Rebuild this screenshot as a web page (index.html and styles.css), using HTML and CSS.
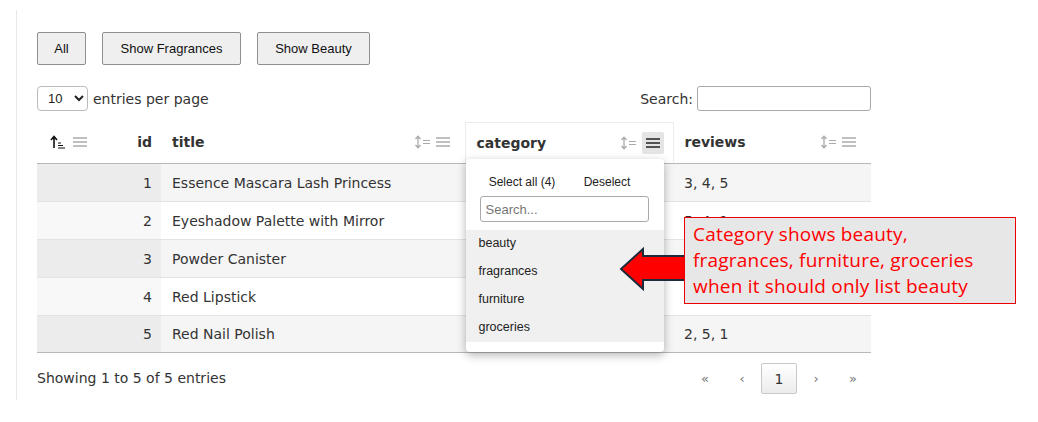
FILE: index.html
```html
<!DOCTYPE html>
<html>
<head>
<meta charset="utf-8">
<link rel="stylesheet" href="styles.css">
</head>
<body>
<div class="page">
  <div class="btns">
    <button class="btn btn-all">All</button>
    <button class="btn btn-frag">Show Fragrances</button>
    <button class="btn btn-beauty">Show Beauty</button>
  </div>
  <div class="controls">
    <label class="len"><select class="len-select"><option>10</option></select><span>entries per page</span></label>
    <label class="search"><span>Search:</span><input class="search-input" type="text"></label>
  </div>
  <table class="dt">
    <colgroup><col class="c-id"><col class="c-title"><col class="c-cat"><col class="c-rev"></colgroup>
    <thead>
      <tr>
        <th class="th-num">
          <div class="th-in">
            <span class="icons">
              <svg class="ic-asc" width="15" height="14" viewBox="0 0 15 14"><path d="M4 13V2M1 5l3-3.5L7 5" fill="none" stroke="#111" stroke-width="1.6"/><path d="M8 8h3M8 10.5h5M8 13h7" stroke="#111" stroke-width="1.2"/></svg>
              <svg class="ic-menu" width="14" height="14" viewBox="0 0 14 14"><path d="M0 3h14M0 7h14M0 11h14" stroke="#aaa" stroke-width="1.3"/></svg>
            </span>
            <span class="th-label">id</span>
          </div>
        </th>
        <th>
          <div class="th-in">
            <span class="th-label">title</span>
            <span class="icons">
              <svg class="ic-sort" width="17" height="14" viewBox="0 0 17 14"><path d="M4 1.5v11M1.5 4L4 1.3 6.5 4M1.5 10L4 12.7 6.5 10" fill="none" stroke="#aaa" stroke-width="1.3"/><path d="M9 5.5h7M9 8.5h7" stroke="#aaa" stroke-width="1.2"/></svg>
              <svg class="ic-menu" width="14" height="14" viewBox="0 0 14 14"><path d="M0 3h14M0 7h14M0 11h14" stroke="#aaa" stroke-width="1.3"/></svg>
            </span>
          </div>
        </th>
        <th class="th-active">
          <div class="th-in">
            <span class="th-label">category</span>
            <span class="icons">
              <svg class="ic-sort" width="17" height="14" viewBox="0 0 17 14"><path d="M4 1.5v11M1.5 4L4 1.3 6.5 4M1.5 10L4 12.7 6.5 10" fill="none" stroke="#aaa" stroke-width="1.3"/><path d="M9 5.5h7M9 8.5h7" stroke="#aaa" stroke-width="1.2"/></svg>
              <span class="menu-on"><svg class="ic-menu" width="14" height="14" viewBox="0 0 14 14"><path d="M0 3h14M0 7h14M0 11h14" stroke="#222" stroke-width="1.5"/></svg></span>
            </span>
          </div>
          <div class="dd">
            <div class="dd-actions"><span class="dd-btn">Select all (4)</span><span class="dd-btn">Deselect</span></div>
            <input class="dd-search" type="text" placeholder="Search...">
            <ul class="dd-list">
              <li>beauty</li>
              <li>fragrances</li>
              <li>furniture</li>
              <li>groceries</li>
            </ul>
          </div>
        </th>
        <th>
          <div class="th-in">
            <span class="th-label">reviews</span>
            <span class="icons">
              <svg class="ic-sort" width="17" height="14" viewBox="0 0 17 14"><path d="M4 1.5v11M1.5 4L4 1.3 6.5 4M1.5 10L4 12.7 6.5 10" fill="none" stroke="#aaa" stroke-width="1.3"/><path d="M9 5.5h7M9 8.5h7" stroke="#aaa" stroke-width="1.2"/></svg>
              <svg class="ic-menu" width="14" height="14" viewBox="0 0 14 14"><path d="M0 3h14M0 7h14M0 11h14" stroke="#aaa" stroke-width="1.3"/></svg>
            </span>
          </div>
        </th>
      </tr>
    </thead>
    <tbody>
      <tr class="odd"><td class="num">1</td><td>Essence Mascara Lash Princess</td><td>beauty</td><td>3, 4, 5</td></tr>
      <tr class="even"><td class="num">2</td><td>Eyeshadow Palette with Mirror</td><td>beauty</td><td>5, 4, 1</td></tr>
      <tr class="odd"><td class="num">3</td><td>Powder Canister</td><td>beauty</td><td>4, 4, 5</td></tr>
      <tr class="even"><td class="num">4</td><td>Red Lipstick</td><td>beauty</td><td>5, 5, 4</td></tr>
      <tr class="odd"><td class="num">5</td><td>Red Nail Polish</td><td>beauty</td><td>2, 5, 1</td></tr>
    </tbody>
  </table>
  <div class="foot">
    <div class="info">Showing 1 to 5 of 5 entries</div>
    <nav class="pager">
      <span class="pg dis">«</span>
      <span class="pg dis">‹</span>
      <span class="pg cur">1</span>
      <span class="pg dis">›</span>
      <span class="pg dis">»</span>
    </nav>
  </div>
</div>
<svg class="arrow" width="72" height="44" viewBox="0 0 72 44"><path d="M2 22L24 2V9H71V33H24V42Z" fill="#ff0000" stroke="#1c2b3a" stroke-width="2" stroke-linejoin="miter"/></svg>
<div class="note">Category shows beauty,<br>fragrances, furniture, groceries<br>when it should only list beauty</div>
</body>
</html>
```

FILE: styles.css
```css
* { box-sizing: border-box; }
html, body { margin: 0; padding: 0; background: #fff; }
body {
  font-family: "DejaVu Sans", Verdana, sans-serif;
  font-size: 14px;
  color: #333;
  position: relative;
  width: 1038px;
  height: 422px;
  overflow: hidden;
}
.page {
  margin: 10px 0 0 16px;
  border-left: 1px solid #e8e8e8;
  padding: 22px 0 0 20px;
  width: 855px;
  height: 390px;
}
.btns { display: flex; gap: 16px; height: 33px; }
.btn {
  font-family: "Liberation Sans", Arial, sans-serif;
  font-size: 13px;
  color: #111;
  background: #efefef;
  border: 1px solid #8f8f8f;
  border-radius: 2px;
  height: 33px;
  padding: 0;
}
.btn-all { width: 49px; }
.btn-frag { width: 139px; }
.btn-beauty { width: 113px; }
.controls {
  margin-top: 21px;
  width: 834px;
  display: flex;
  justify-content: space-between;
  align-items: center;
  height: 25px;
}
.len { display: flex; align-items: center; gap: 5px; }
.len-select {
  width: 51px;
  height: 25px;
  border: 1px solid #bbb;
  border-radius: 4px;
  background: #fff;
  font-family: "Liberation Sans", Arial, sans-serif;
  font-size: 13px;
  color: #222;
  padding-left: 6px;
}
.search { display: flex; align-items: center; gap: 4px; }
.search-input {
  width: 174px;
  height: 25px;
  border: 1px solid #aaa;
  border-radius: 3px;
}
.dt {
  margin-top: 11px;
  width: 834px;
  border-collapse: collapse;
  table-layout: fixed;
}
.c-id { width: 124px; }
.c-title { width: 304px; }
.c-cat { width: 208px; }
.c-rev { width: 198px; }
.dt th {
  position: relative;
  height: 41px;
  padding: 0 15px 1px 11px;
  text-align: left;
  font-weight: bold;
  font-size: 14px;
  color: #333;
  border-bottom: 1px solid #b8b8b8;
}
.dt th.th-num { padding: 0 9px 1px 13px; }
.th-in { display: flex; align-items: center; justify-content: space-between; }
.icons { display: flex; align-items: center; gap: 5px; }
.th-num .icons { gap: 8px; }
.icons svg { display: block; }
.th-active {
  border: 1px solid #ececec;
  border-bottom: 1px solid #b8b8b8 !important;
}
.dt th.th-active { padding-right: 9px; }
.menu-on {
  display: flex;
  align-items: center;
  justify-content: center;
  width: 22px;
  height: 22px;
  background: #e4e4e4;
  border-radius: 2px;
}
.dd {
  position: absolute;
  left: 0;
  top: 36px;
  width: 198px;
  height: 193px;
  background: #fff;
  border-radius: 4px;
  box-shadow: 0 3px 10px rgba(0,0,0,0.3);
  z-index: 5;
  padding: 13px 0 10px;
  font-family: "Liberation Sans", Arial, sans-serif;
  font-size: 12px;
  font-weight: normal;
  color: #222;
}
.dd-actions { display: flex; padding: 0 14px; height: 20px; align-items: center; }
.dd-btn { flex: 1; text-align: center; }
.dd-search {
  display: block;
  margin: 4px 0 0 14px;
  width: 169px;
  height: 26px;
  border: 1px solid #aaa;
  border-radius: 3px;
  padding: 0 5px;
  font-family: "Liberation Sans", Arial, sans-serif;
  font-size: 13px;
}
.dd-search::placeholder { color: #777; }
.dd-list {
  list-style: none;
  margin: 8px 0 0;
  padding: 0;
  background: #f0f0f0;
  font-size: 12.5px;
}
.dd-list li { height: 28px; line-height: 26px; padding-left: 13px; }
.dt td {
  height: 38px;
  padding: 0 10px 0 11px;
  border-top: 1px solid #e3e3e3;
  white-space: nowrap;
}
.dt tbody tr:first-child td { border-top: none; }
.dt tbody tr:last-child td { height: 37px; border-bottom: 1px solid #b8b8b8; }
.dt td.num { text-align: right; padding-right: 9px; }
.odd td { background: #f5f5f5; }
.odd td.num { background: #ececec; }
.even td { background: #fff; }
.even td.num { background: #f8f8f8; }
.foot {
  width: 834px;
  margin-top: 10px;
  display: flex;
  justify-content: space-between;
  align-items: center;
  height: 31px;
}
.info { font-family: "DejaVu Sans", sans-serif; font-size: 14px; letter-spacing: 0; padding-bottom: 2px; }
.pager { display: flex; gap: 1px; }
.pg {
  width: 36px;
  height: 31px;
  display: flex;
  align-items: center;
  justify-content: center;
  font-size: 13px;
  color: #777;
}
.pg.cur {
  color: #333;
  border: 1px solid #c8c8c8;
  border-radius: 2px;
  background: linear-gradient(#fff, #ececec);
  font-size: 14px;
}
.arrow { position: absolute; left: 619px; top: 247px; z-index: 10; }
.note {
  position: absolute;
  z-index: 11;
  left: 684px;
  top: 217px;
  width: 332px;
  height: 87px;
  background: #e7e7e7;
  border: 1px solid #ee0000;
  color: #ff0000;
  font-family: "Open Sans", "Liberation Sans", sans-serif;
  font-size: 19px;
  letter-spacing: 0.2px;
  line-height: 26px;
  padding: 3px 8px 0;
  white-space: nowrap;
}
```
